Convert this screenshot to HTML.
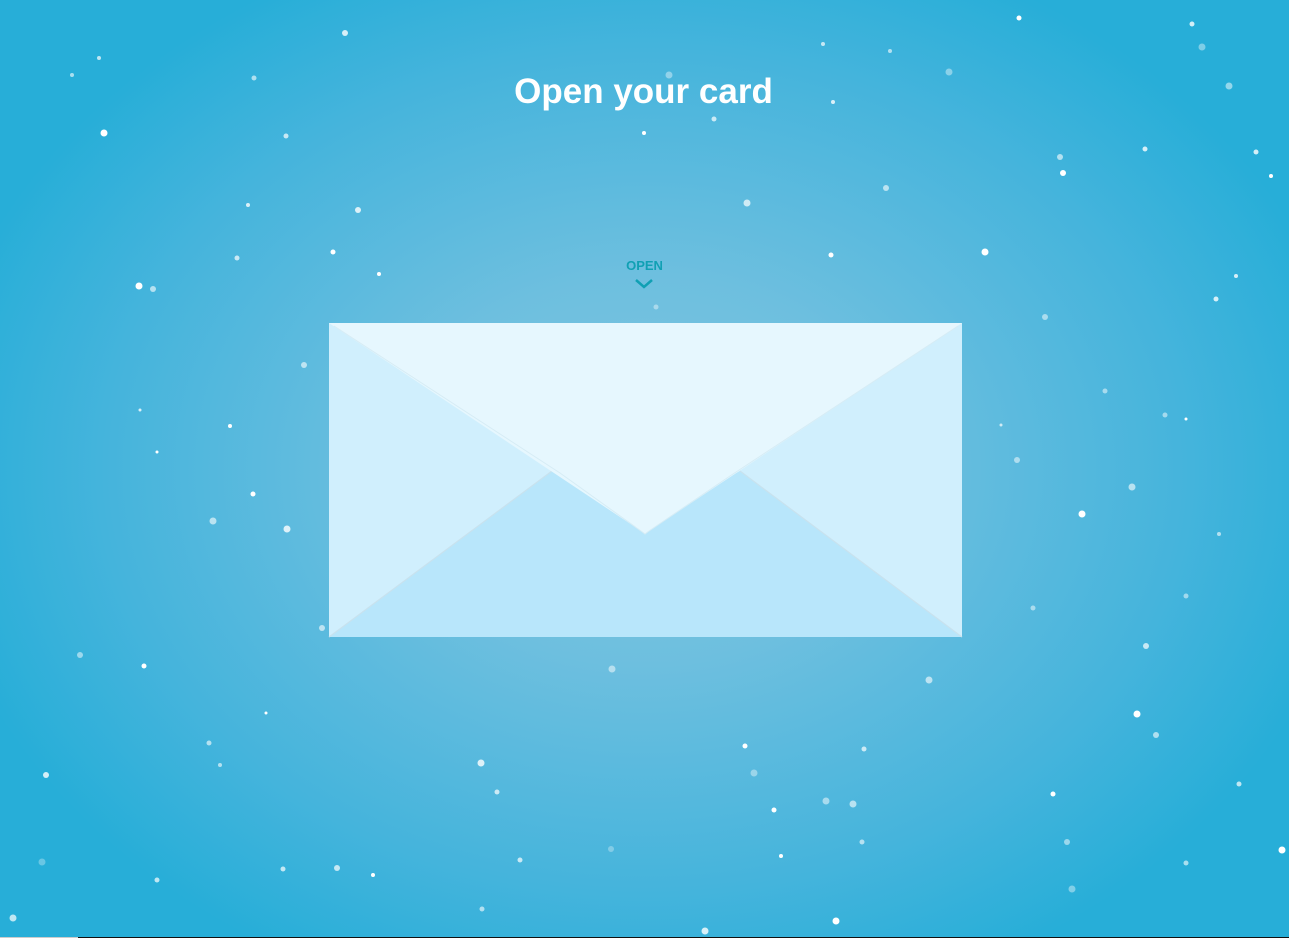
<!DOCTYPE html>
<html><head><meta charset="utf-8"><style>
html,body{margin:0;padding:0;width:1289px;height:938px;overflow:hidden}
body{background:radial-gradient(ellipse 720px 560px at 645px 470px,#80c6df 0%,#6dbfdf 35%,#45b4dc 75%,#27aed8 100%);font-family:"Liberation Sans",sans-serif;position:relative}
h1{position:absolute;left:0;right:0;top:72px;margin:0;text-align:center;color:#fff;font-size:35px;font-weight:bold;letter-spacing:0px;padding-right:2px}
.open{position:absolute;left:0;right:0;top:258px;text-align:center;color:#10a0b4;font-size:13px;font-weight:bold}
svg{position:absolute;left:0;top:0}
</style></head><body>
<svg width="1289" height="938">
<g fill="#fff">
<circle cx="345" cy="33" r="3" opacity=".8"/><circle cx="1019" cy="18" r="2.5"/><circle cx="104" cy="133" r="3.5"/><circle cx="139" cy="286" r="3.5"/><circle cx="153" cy="289" r="3" opacity=".6"/><circle cx="358" cy="210" r="3" opacity=".8"/><circle cx="379" cy="274" r="2"/><circle cx="286" cy="136" r="2.5" opacity=".7"/><circle cx="254" cy="78" r="2.5" opacity=".6"/><circle cx="72" cy="75" r="2" opacity=".6"/><circle cx="99" cy="58" r="2" opacity=".7"/><circle cx="230" cy="426" r="2"/><circle cx="253" cy="494" r="2.5"/><circle cx="213" cy="521" r="3.5" opacity=".6"/><circle cx="287" cy="529" r="3.5" opacity=".8"/><circle cx="304" cy="365" r="3" opacity=".6"/><circle cx="144" cy="666" r="2.5"/><circle cx="80" cy="655" r="3" opacity=".5"/><circle cx="46" cy="775" r="3" opacity=".8"/><circle cx="209" cy="743" r="2.5" opacity=".6"/><circle cx="13" cy="918" r="3.5" opacity=".7"/><circle cx="157" cy="880" r="2.5" opacity=".7"/><circle cx="337" cy="868" r="3" opacity=".7"/><circle cx="481" cy="763" r="3.5" opacity=".8"/><circle cx="497" cy="792" r="2.5" opacity=".7"/><circle cx="612" cy="669" r="3.5" opacity=".5"/><circle cx="745" cy="746" r="2.5"/><circle cx="754" cy="773" r="3.5" opacity=".4"/><circle cx="774" cy="810" r="2.5"/><circle cx="853" cy="804" r="3.5" opacity=".6"/><circle cx="864" cy="749" r="2.5" opacity=".7"/><circle cx="836" cy="921" r="3.5"/><circle cx="705" cy="931" r="3.5" opacity=".8"/><circle cx="929" cy="680" r="3.5" opacity=".6"/><circle cx="1137" cy="714" r="3.5"/><circle cx="1156" cy="735" r="3" opacity=".6"/><circle cx="1146" cy="646" r="3" opacity=".7"/><circle cx="1082" cy="514" r="3.5"/><circle cx="1132" cy="487" r="3.5" opacity=".6"/><circle cx="1017" cy="460" r="3" opacity=".5"/><circle cx="985" cy="252" r="3.5"/><circle cx="1045" cy="317" r="3" opacity=".5"/><circle cx="886" cy="188" r="3" opacity=".6"/><circle cx="747" cy="203" r="3.5" opacity=".7"/><circle cx="831" cy="255" r="2.5"/><circle cx="1063" cy="173" r="3"/><circle cx="1060" cy="157" r="3" opacity=".6"/><circle cx="1229" cy="86" r="3.5" opacity=".5"/><circle cx="1202" cy="47" r="3.5" opacity=".4"/><circle cx="1256" cy="152" r="2.5" opacity=".8"/><circle cx="1216" cy="299" r="2.5" opacity=".8"/><circle cx="1282" cy="850" r="3.5"/><circle cx="1239" cy="784" r="2.5" opacity=".7"/><circle cx="1053" cy="794" r="2.5"/><circle cx="1072" cy="889" r="3.5" opacity=".4"/><circle cx="1067" cy="842" r="3" opacity=".5"/><circle cx="949" cy="72" r="3.5" opacity=".4"/><circle cx="669" cy="75" r="3.5" opacity=".4"/><circle cx="644" cy="133" r="2"/><circle cx="714" cy="119" r="2.5" opacity=".7"/><circle cx="333" cy="252" r="2.5"/><circle cx="237" cy="258" r="2.5" opacity=".7"/><circle cx="322" cy="628" r="3" opacity=".6"/><circle cx="248" cy="205" r="2" opacity=".8"/><circle cx="656" cy="307" r="2.5" opacity=".4"/><circle cx="826" cy="801" r="3.5" opacity=".5"/><circle cx="482" cy="909" r="2.5" opacity=".6"/><circle cx="283" cy="869" r="2.5" opacity=".7"/><circle cx="1186" cy="596" r="2.5" opacity=".5"/><circle cx="1033" cy="608" r="2.5" opacity=".5"/><circle cx="1186" cy="863" r="2.5" opacity=".6"/><circle cx="1145" cy="149" r="2.5" opacity=".8"/><circle cx="1192" cy="24" r="2.5" opacity=".8"/><circle cx="1271" cy="176" r="2"/><circle cx="823" cy="44" r="2" opacity=".7"/><circle cx="833" cy="102" r="2" opacity=".8"/><circle cx="890" cy="51" r="2" opacity=".6"/><circle cx="520" cy="860" r="2.5" opacity=".7"/><circle cx="611" cy="849" r="3" opacity=".3"/><circle cx="1165" cy="415" r="2.5" opacity=".5"/><circle cx="1105" cy="391" r="2.5" opacity=".5"/><circle cx="42" cy="862" r="3.5" opacity=".3"/><circle cx="781" cy="856" r="2"/><circle cx="862" cy="842" r="2.5" opacity=".6"/><circle cx="1219" cy="534" r="2" opacity=".6"/><circle cx="1236" cy="276" r="2" opacity=".8"/><circle cx="157" cy="452" r="1.5"/><circle cx="140" cy="410" r="1.5" opacity=".8"/><circle cx="266" cy="713" r="1.5"/><circle cx="220" cy="765" r="2" opacity=".6"/><circle cx="373" cy="875" r="2"/><circle cx="1001" cy="425" r="1.5" opacity=".7"/><circle cx="1186" cy="419" r="1.5"/></g>
<polygon points="329,323 962,323 962,637 329,637" fill="#d0effd"/>
<polygon points="329,637 552,471 645,520 740,471 962,637" fill="#b8e6fb"/>
<polyline points="329,637 552,471" stroke="#c8e2ee" stroke-width="1.2" fill="none"/>
<polyline points="962,637 740,471" stroke="#c8e2ee" stroke-width="1.2" fill="none"/>
<polygon points="329,323 962,323 649,531 645,534 641,531" fill="#e6f7fe"/>
<polyline points="334,326 560,473 641,531 645,534 649,531 730,476 958,326" stroke="#d6ecf5" stroke-width="1" fill="none"/>
<path d="M636 280 L644 287 L652 280" stroke="#10a0b4" stroke-width="2.5" fill="none"/>
<rect x="0" y="937" width="78" height="1" fill="#ccc"/><rect x="78" y="937" width="1211" height="1" fill="#111"/>
</svg>
<h1>Open your card</h1>
<div class="open">OPEN</div>
</body></html>
